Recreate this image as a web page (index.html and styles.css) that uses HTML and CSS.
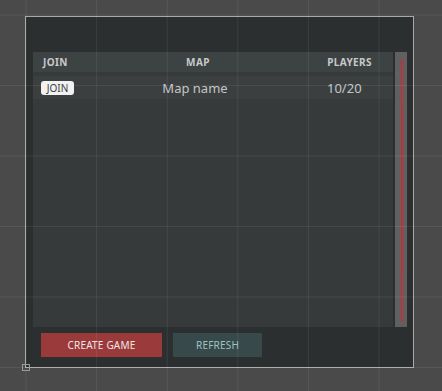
FILE: index.html
```html
<!DOCTYPE html>
<html>

<head>
    <link rel="stylesheet" href="styles.css">
</head>

<body>
    <div class="panel">
        <div class="list-area">
            <div class="list">
                <div class="row header">
                    <span class="cell join-col">JOIN</span>
                    <span class="cell map-col">MAP</span>
                    <span class="cell players-col">PLAYERS</span>
                </div>
                <div class="row game">
                    <span class="cell join-col"><button class="join-button">JOIN</button></span>
                    <span class="cell map-col">Map name</span>
                    <span class="cell players-col">10/20</span>
                </div>
            </div>
            <div class="scrollbar">
                <svg class="scroll-line" width="3" height="263" viewBox="0 0 3 263" shape-rendering="crispEdges">
                    <rect x="0" y="0" width="3" height="46" fill="#6e5758" />
                    <rect x="0" y="0" width="1" height="46" fill="#b3393c" />
                    <rect x="2" y="0" width="1" height="46" fill="#b3393c" />
                    <rect x="1" y="46" width="2" height="168" fill="#c42f34" />
                    <rect x="0" y="214" width="3" height="49" fill="#6e5758" />
                    <rect x="0" y="214" width="1" height="49" fill="#b3393c" />
                    <rect x="2" y="214" width="1" height="49" fill="#b3393c" />
                </svg>
            </div>
        </div>
        <div class="actions">
            <button class="button create">CREATE GAME</button>
            <button class="button refresh">REFRESH</button>
        </div>
    </div>

    <div class="grid-overlay"></div>
    <div class="corner-handle"></div>
</body>

</html>
```

FILE: styles.css
```css
body {
    margin: 0;
    width: 442px;
    height: 391px;
    overflow: hidden;
    background-color: #4a4a4a;
    font-family: "Noto Sans", "Open Sans", sans-serif;
    position: relative;
}

.panel {
    margin: 16px 0 0 25px;
    width: 389px;
    height: 352px;
    border: 1px solid #a9a9a9;
    background-color: #2b2f30;
    padding: 35px 6px 9px 7px;
    box-sizing: border-box;
    display: flex;
    flex-direction: column;
}

.list-area {
    display: flex;
    gap: 2px;
    height: 275px;
}

.list {
    flex: 1;
    background-color: #363a3b;
    display: flex;
    flex-direction: column;
    gap: 4px;
}

.row {
    display: grid;
    grid-template-columns: 87px 156px 1fr;
    align-items: center;
}

.header {
    height: 20px;
    background-color: #3d4243;
    font-size: 10px;
    font-weight: bold;
    color: #c9c9c9;
    letter-spacing: 0.4px;
}

.game {
    height: 23px;
    background-color: #3b3f40;
    font-size: 13px;
    color: #c4c6c6;
}

.header .join-col {
    padding-left: 10px;
}

.map-col {
    text-align: center;
}

.header .players-col {
    text-align: right;
    padding-right: 21px;
}

.game .map-col {
    padding-right: 6px;
}

.game .join-col {
    padding-left: 8px;
    display: flex;
}

.game .players-col {
    padding-left: 51px;
}

.join-button {
    background-color: #f2f2f2;
    color: #3a3a3a;
    border: none;
    border-radius: 3px;
    font-family: "Noto Sans", sans-serif;
    font-size: 10px;
    height: 14px;
    width: 33px;
    padding: 0;
    line-height: 14px;
}

.scrollbar {
    width: 12px;
    background-color: #606060;
    padding: 7px 0 5px 5px;
    box-sizing: border-box;
}

.scroll-line {
    display: block;
}

.actions {
    display: flex;
    gap: 11px;
    padding: 6px 0 0 8px;
}

.button {
    height: 24px;
    border: none;
    font-family: "Noto Sans", sans-serif;
    font-size: 10px;
    padding: 0;
    letter-spacing: 0.2px;
}

.create {
    width: 121px;
    background-color: #9b3a3b;
    color: #f0e6e6;
}

.refresh {
    width: 89px;
    background-color: #37494b;
    color: #9cc3c3;
}

.grid-overlay {
    position: absolute;
    inset: 0;
    pointer-events: none;
    background-image:
        linear-gradient(to right, rgba(255, 255, 255, 0.07) 1px, transparent 1px),
        linear-gradient(to bottom, rgba(255, 255, 255, 0.07) 1px, transparent 1px);
    background-size: 70.6px 70.5px;
    background-position: 25.5px 14.5px;
}

.corner-handle {
    position: absolute;
    left: 22px;
    top: 364px;
    width: 8px;
    height: 7px;
    border: 1px solid #9a9a9a;
    box-sizing: border-box;
}
```
